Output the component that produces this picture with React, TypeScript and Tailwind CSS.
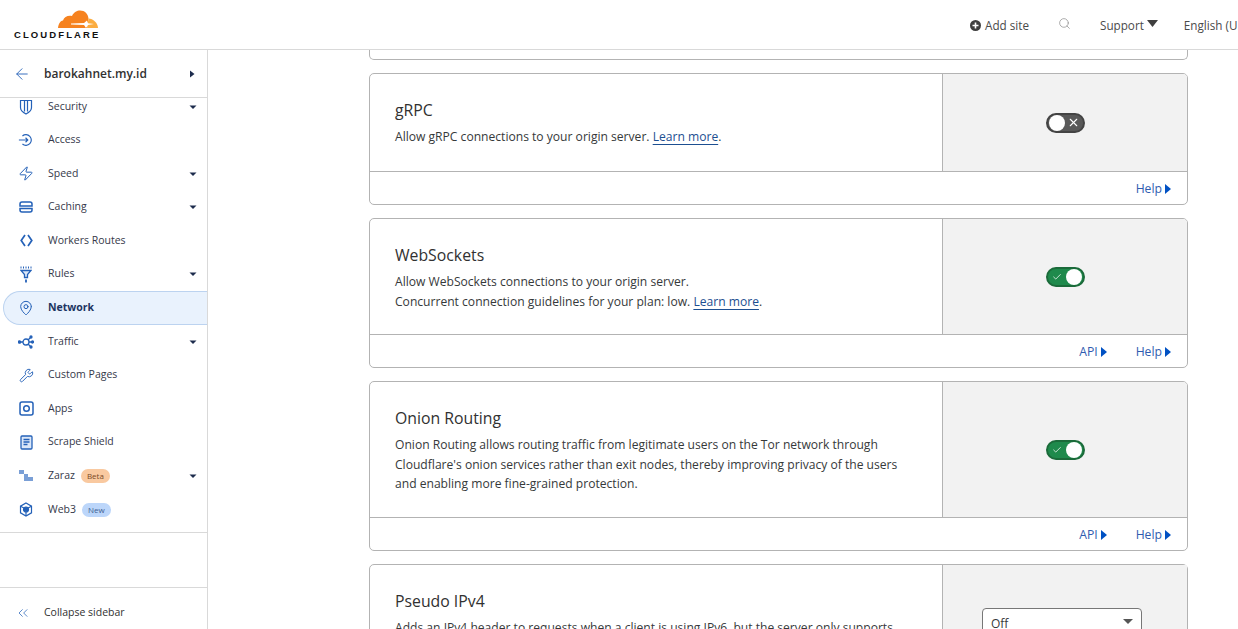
import React from 'react';
import { ArrowLeft, ChevronsLeft, Check, MapPin, Search, Wrench, X, Zap } from 'lucide-react';

const blue = '#2461b8';

const ShieldIcon = () => (
  <svg width="16" height="16" viewBox="0 0 16 16" fill="none" stroke={blue} strokeWidth="1.2">
    <path d="M2.500 1.500h11v7c0 3-2.500 5-5.500 6.500-3-1.500-5.500-3.500-5.500-6.500z" />
    <path d="M6.500 2v10.500M9.500 2v10.500" />
  </svg>
);

const AccessIcon = () => (
  <svg width="18" height="16" viewBox="0 0 18 16" fill="none" stroke={blue} strokeWidth="1.3">
    <path d="M5 3.500a6 6 0 1 1 0 9" />
    <path d="M1 8h10M8.500 5.500 11 8l-2.500 2.500" />
  </svg>
);

const CachingIcon = () => (
  <svg width="14" height="12" viewBox="0 0 14 12" fill="none" stroke={blue} strokeWidth="1.500">
    <path d="M3 1h8a2 2 0 0 1 2 2v2H1V3a2 2 0 0 1 2-2z" />
    <path d="M1 7.500h12V9a2 2 0 0 1-2 2H3a2 2 0 0 1-2-2z" />
  </svg>
);

const WorkersIcon = () => (
  <svg width="13" height="13" viewBox="0 0 13 13" fill="none" stroke={blue} strokeWidth="1.700">
    <path d="M5 1 1.200 6.500 5 12M8 1 11.800 6.500 8 12" />
  </svg>
);

const RulesIcon = () => (
  <svg width="12" height="17" viewBox="0 0 12 17" fill="none" stroke={blue} strokeWidth="1.300">
    <path d="M1 .5v2M3.500 .5v2M6 .5v2M8.500 .5v2M11 .5v2" strokeWidth="1" />
    <path d="M1 4.500h10L7.500 8.500v3h-3v-3z" fill="#dbe7f8" />
    <path d="M6 13.500v3" strokeWidth="1.800" />
  </svg>
);

const TrafficIcon = () => (
  <svg width="16" height="14" viewBox="0 0 16 14" fill="none" stroke={blue} strokeWidth="1.300">
    <circle cx="1.500" cy="7" r="1.200" fill={blue} />
    <circle cx="8" cy="7" r="3" />
    <path d="M3 7h2M10 5l2.500-2.500M10 9l2.500 2.500M11 7h3" />
    <circle cx="13" cy="2" r="1" fill={blue} />
    <circle cx="13" cy="12" r="1" fill={blue} />
    <circle cx="14.500" cy="7" r="1" fill={blue} />
  </svg>
);

const AppsIcon = () => (
  <svg width="15" height="15" viewBox="0 0 15 15" fill="none" stroke={blue} strokeWidth="1.500">
    <rect x="1" y="1" width="13" height="13" rx="2" />
    <circle cx="7.500" cy="7.500" r="2.800" />
  </svg>
);

const ScrapeIcon = () => (
  <svg width="13" height="15" viewBox="0 0 13 15" fill="none" stroke={blue} strokeWidth="1.300">
    <rect x="1" y="1" width="11" height="13" rx="1" fill="#dbe7f8" />
    <path d="M3.500 4.500h6M3.500 7h6M3.500 9.500h4" />
  </svg>
);

const ZarazIcon = () => (
  <svg width="15" height="13" viewBox="0 0 15 13" fill="#7a9fd6">
    <path d="M0 1h5v4H0zM5 5h4v7H5zM9 8h5v4H9z" />
  </svg>
);

const Web3Icon = () => (
  <svg width="14" height="15" viewBox="0 0 14 15" fill="none" stroke={blue} strokeWidth="1.200">
    <path d="M7 1l5.500 3.200v6.600L7 14l-5.500-3.200V4.200z" />
    <circle cx="7" cy="7.500" r="2.500" fill={blue} />
    <path d="M1.500 4.200 5 6M12.500 4.200 9 6M7 10v4" />
  </svg>
);

const Caret = ({ right }: { right?: boolean }) => (
  <svg width="8" height="8" viewBox="0 0 8 8" fill="#1d2c4d" className="shrink-0">
    {right ? <path d="M2 0.500 6.500 4 2 7.500z" /> : <path d="M0.500 2.500h7L4 6z" />}
  </svg>
);

const navItems = [
  { label: 'Access', icon: <AccessIcon /> },
  { label: 'Speed', icon: <Zap size={17} color={blue} strokeWidth={1.5} />, caret: true },
  { label: 'Caching', icon: <CachingIcon />, caret: true },
  { label: 'Workers Routes', icon: <WorkersIcon /> },
  { label: 'Rules', icon: <RulesIcon />, caret: true },
  { label: 'Network', icon: <MapPin size={16} color={blue} strokeWidth={1.500} />, active: true },
  { label: 'Traffic', icon: <TrafficIcon />, caret: true },
  { label: 'Custom Pages', icon: <Wrench size={15} color={blue} strokeWidth={1.500} /> },
  { label: 'Apps', icon: <AppsIcon /> },
  { label: 'Scrape Shield', icon: <ScrapeIcon /> },
  { label: 'Zaraz', icon: <ZarazIcon />, caret: true, badge: 'Beta' },
  { label: 'Web3', icon: <Web3Icon />, badge: 'New' },
];

const NavRow = ({ item }: { item: (typeof navItems)[number] }) => (
  <div
    className={
      'flex h-[33.6px] items-center ' +
      (item.active
        ? 'ml-[3px] rounded-l-[17px] border border-r-0 border-[#bcd3f0] bg-[#e9f2fd] pl-[14px] pr-[10px]'
        : 'pl-[18px] pr-[10px]')
    }
  >
    <span className="flex w-[30px] shrink-0 items-center">
      <span className="flex w-4 justify-center">{item.icon}</span>
    </span>
    <span className={item.active ? 'text-[10.5px] font-bold text-[#1d3461]' : 'text-[10.5px] text-[#36394a]'}>{item.label}</span>
    {item.badge && (
      <span
        className={
          'ml-[6px] rounded-full px-[6px] py-[1px] text-[8px] leading-[12px] ' +
          (item.badge === 'Beta' ? 'bg-[#f9c9a0] text-[#7a4a28]' : 'bg-[#bcd6fa] text-[#3f5f92]')
        }
      >
        {item.badge}
      </span>
    )}
    {item.caret && (
      <span className="ml-auto">
        <Caret />
      </span>
    )}
  </div>
);

const Sidebar = () => (
  <aside className="flex w-[208px] shrink-0 flex-col border-r border-[#d9d9d9]">
    <div className="flex h-[48px] shrink-0 items-center border-b border-[#d9d9d9] pl-[13px] pr-[11px]">
      <ArrowLeft size={18} color={blue} strokeWidth={1.200} className="shrink-0" />
      <span className="ml-[13px] pt-[1px] text-[12px] font-semibold text-[#313131]">barokahnet.my.id</span>
      <span className="ml-auto">
        <Caret right />
      </span>
    </div>
    <div className="h-[435px] shrink-0 overflow-hidden border-b border-[#d9d9d9]">
      <div className="flex h-[17px] items-center pl-[18px] pr-[10px]">
        <span className="flex w-[30px] shrink-0">
          <span className="flex w-4 justify-center">
            <ShieldIcon />
          </span>
        </span>
        <span className="text-[10.5px] text-[#36394a]">Security</span>
        <span className="ml-auto">
          <Caret />
        </span>
      </div>
      <div className="pt-[8.2px]">
        {navItems.map((item) => (
          <NavRow key={item.label} item={item} />
        ))}
      </div>
    </div>
    <div className="h-[55px] shrink-0 border-b border-[#d9d9d9]" />
    <div className="flex flex-1 items-center pl-[15px] pt-[8px]">
      <ChevronsLeft size={16} color={blue} strokeWidth={1.100} />
      <span className="ml-[13px] text-[10.5px] text-[#313131]">Collapse sidebar</span>
    </div>
  </aside>
);

const Toggle = ({ on }: { on: boolean }) => (
  <div
    className={
      'ml-[1px] flex h-[20px] w-[39px] items-center justify-between rounded-full border-2 px-[1px] ' +
      (on ? 'border-[#1b6b3a] bg-[#1f8a4c]' : 'border-[#444] bg-[#595959]')
    }
  >
    {on ? (
      <>
        <Check size={10} color="#fff" strokeWidth={1.800} className="ml-[3px]" />
        <span className="h-[16px] w-[16px] rounded-full bg-white" />
      </>
    ) : (
      <>
        <span className="h-[16px] w-[16px] rounded-full bg-white" />
        <X size={13} color="#fff" strokeWidth={2} className="mr-[2px]" />
      </>
    )}
  </div>
);

const FooterLink = ({ label }: { label: string }) => (
  <span className="flex items-center gap-[3px] text-[12.2px] text-[#2f5bb0]">
    {label}
    <svg width="6" height="10" viewBox="0 0 6 10" fill="#0051c3">
      <path d="M0 0l6 5-6 5z" />
    </svg>
  </span>
);

const LearnMore = () => (
  <span className="text-[#1d4f91] underline decoration-[#1d4f91] underline-offset-[3px]">Learn more</span>
);

const Card = ({
  title,
  bodyH,
  api,
  toggle,
  children,
}: {
  title: string;
  bodyH: string;
  api?: boolean;
  toggle: boolean;
  children: React.ReactNode;
}) => (
  <section className="mt-[13px] overflow-hidden rounded-[5px] border border-[#b3b3b3]">
    <div className={'flex border-b border-[#b3b3b3] ' + bodyH}>
      <div className="flex-1 pl-[25px] pr-[30px] pt-[24px]">
        <h3 className="text-[15.8px] leading-[24px] text-[#313131]">{title}</h3>
        <p className="mt-[5px] text-[12.1px] leading-[19.5px] text-[#36393a]">{children}</p>
      </div>
      <div className="flex w-[245px] shrink-0 items-center justify-center border-l border-[#b3b3b3] bg-[#f2f2f2]">
        <Toggle on={toggle} />
      </div>
    </div>
    <div className="flex h-[32px] items-center justify-end gap-[29px] pr-[16px] pt-[3px]">
      {api && <FooterLink label="API" />}
      <FooterLink label="Help" />
    </div>
  </section>
);

const Logo = () => (
  <div className="flex flex-col items-end">
    <svg width="42" height="19" viewBox="0 0 42 19" className="mr-[1px] block">
      <path
        d="M1 18C1.500 14 3 11 6 10.500 7 7 11 5 15 6 17 2 20 .5 23 .5 28 .5 31 4 31.500 8.500L30 18z"
        fill="#f6821f"
      />
      <path d="M31.500 8.500C36 8.500 41 13 41 18H30z" fill="#fbad41" />
      <path d="M14 13.500 27 13 30 10.500 31 13.300 37 14 31 15 29 18 27 15 14 14.500z" fill="#fff" />
    </svg>
    <span className="font-['Liberation_Sans',sans-serif] text-[9.5px] font-bold leading-[11px] tracking-[2.1px] text-[#111]">
      CLOUDFLARE
    </span>
  </div>
);

const Header = () => (
  <header className="flex h-[50px] shrink-0 items-center border-b border-[#d9d9d9] pl-[14px]">
    <Logo />
    <div className="ml-auto flex w-[268px] shrink-0 items-center whitespace-nowrap pt-[2px] text-[11.7px] text-[#4a4a4a]">
      <svg width="11" height="11" viewBox="0 0 11 11" className="shrink-0">
        <circle cx="5.500" cy="5.500" r="5.500" fill="#3f3f3f" />
        <path d="M5.500 2.500v6M2.500 5.500h6" stroke="#fff" strokeWidth="1.600" />
      </svg>
      <span className="ml-[4px]">Add site</span>
      <Search size={13} color="#8a8a8a" strokeWidth={1.300} className="ml-[29px] -mt-[3px] shrink-0" />
      <span className="ml-[29px]">Support</span>
      <svg width="11" height="7" viewBox="0 0 11 7" fill="#3f3f3f" className="ml-[3px] -mt-[3px] shrink-0">
        <path d="M0 0h11L5.500 7z" />
      </svg>
      <span className="ml-[26px]">English (U</span>
    </div>
  </header>
);

export default function App() {
  return (
    <div className="flex h-[629px] w-[1238px] flex-col overflow-hidden bg-white font-['Open_Sans',sans-serif]">
      <Header />
      <div className="flex min-h-0 flex-1">
        <Sidebar />
        <main className="min-w-0 flex-1 overflow-hidden pl-[161px] pr-[50px]">
          <div className="h-[10px] rounded-b-[5px] border border-t-0 border-[#b3b3b3]" />
          <Card title="gRPC" bodyH="h-[98px]" toggle={false}>
            Allow gRPC connections to your origin server. <LearnMore />.
          </Card>
          <Card title="WebSockets" bodyH="h-[116px]" api toggle>
            Allow WebSockets connections to your origin server.
            <br />
            Concurrent connection guidelines for your plan: low. <LearnMore />.
          </Card>
          <Card title="Onion Routing" bodyH="h-[136px]" api toggle>
            Onion Routing allows routing traffic from legitimate users on the Tor network through Cloudflare's onion
            services rather than exit nodes, thereby improving privacy of the users and enabling more fine-grained
            protection.
          </Card>
          <section className="mt-[13px] flex h-[120px] rounded-t-[5px] border border-[#b3b3b3]">
            <div className="flex-1 pl-[25px] pr-[30px] pt-[24px]">
              <h3 className="text-[15.8px] leading-[24px] text-[#313131]">Pseudo IPv4</h3>
              <p className="mt-[5px] text-[12.1px] leading-[19.5px] text-[#36393a]">
                Adds an IPv4 header to requests when a client is using IPv6, but the server only supports IPv4.
              </p>
            </div>
            <div className="w-[245px] shrink-0 border-l border-[#b3b3b3] bg-[#f2f2f2] pl-[39px] pt-[43px]">
              <div className="flex h-[32px] w-[160px] items-start justify-between rounded-[4px] border border-[#777] bg-white px-[8px] pt-[6px] text-[12px] text-[#36393a]">
                Off
                <svg width="10" height="6" viewBox="0 0 10 6" fill="#555" className="mt-[4px]">
                  <path d="M0 0h10L5 5z" />
                </svg>
              </div>
            </div>
          </section>
        </main>
      </div>
    </div>
  );
}
